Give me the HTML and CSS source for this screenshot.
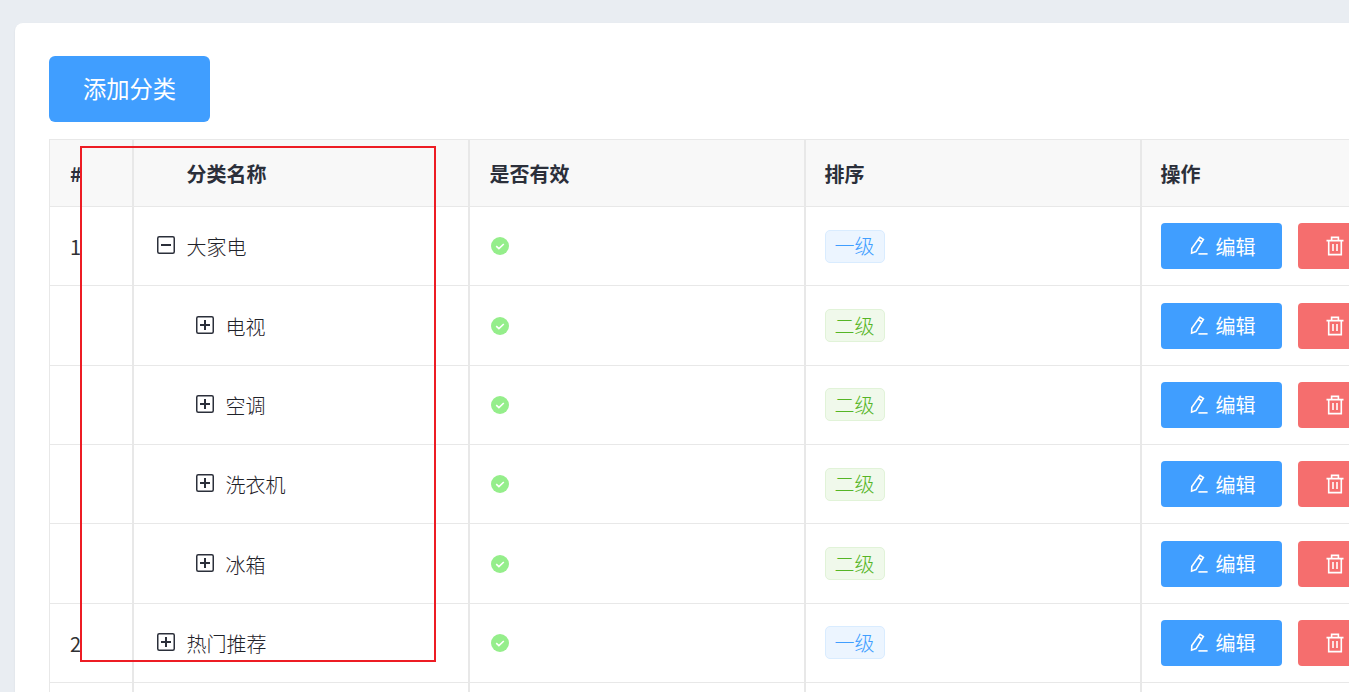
FILE: index.html
```html
<!DOCTYPE html>
<html lang="en">
<head>
    <meta charset="UTF-8">
    <title>商品分类</title>
    <link rel="stylesheet" href="styles.css">
</head>
<body>
    <svg class="sprites" xmlns="http://www.w3.org/2000/svg">
        <symbol id="i-minus" viewBox="0 0 18 18">
            <rect x="0.75" y="0.75" width="16.5" height="16.5" rx="1.5" fill="none" stroke="currentColor" stroke-width="1.5"/>
            <path d="M4 9h10" stroke="currentColor" stroke-width="2"/>
        </symbol>
        <symbol id="i-plus" viewBox="0 0 18 18">
            <rect x="0.75" y="0.75" width="16.5" height="16.5" rx="1.5" fill="none" stroke="currentColor" stroke-width="1.5"/>
            <path d="M4 9h10M9 4v10" stroke="currentColor" stroke-width="2"/>
        </symbol>
        <symbol id="i-check" viewBox="0 0 18 18">
            <circle cx="9" cy="9" r="9" fill="#95ee8b"/>
            <path d="M5.2 9.2l2.7 2.4 4.9-4.6" fill="none" stroke="#fff" stroke-width="1.6"/>
        </symbol>
        <symbol id="i-edit" viewBox="0 0 18 20">
            <path d="M9.8 1.2l3.6 2.2-7.4 12.2-4.4 1.6 0.2-4.6zM8.2 3.8l3.6 2.2" fill="none" stroke="currentColor" stroke-width="1.6"/>
            <path d="M8.4 17.9h9.2" stroke="currentColor" stroke-width="1.6"/>
        </symbol>
        <symbol id="i-delete" viewBox="0 0 18 20">
            <path d="M0.5 4.6h17M5.6 4.6V1.4h6.8v3.2M2.7 4.6v14h12.6v-14M7 8v7M11 8v7" fill="none" stroke="currentColor" stroke-width="1.6"/>
        </symbol>
    </svg>

    <div class="card">
        <button class="btn btn-add">添加分类</button>

        <table class="cat-table">
            <colgroup>
                <col class="col-index">
                <col class="col-wide">
                <col class="col-wide">
                <col class="col-wide">
                <col class="col-wide">
            </colgroup>
            <thead>
                <tr>
                    <th>#</th>
                    <th><span class="name-head">分类名称</span></th>
                    <th>是否有效</th>
                    <th>排序</th>
                    <th>操作</th>
                </tr>
            </thead>
            <tbody>
                <tr>
                    <td class="index-cell">1</td>
                    <td><div class="tree-cell"><svg class="tree-icon"><use href="#i-minus"/></svg>大家电</div></td>
                    <td><svg class="ok-icon"><use href="#i-check"/></svg></td>
                    <td><span class="tag tag-blue">一级</span></td>
                    <td><div class="ops"><button class="btn btn-edit"><svg class="btn-icon"><use href="#i-edit"/></svg>编辑</button><button class="btn btn-del" aria-label="删除"><svg class="btn-icon"><use href="#i-delete"/></svg></button></div></td>
                </tr>
                <tr>
                    <td class="index-cell"></td>
                    <td><div class="tree-cell child"><svg class="tree-icon"><use href="#i-plus"/></svg>电视</div></td>
                    <td><svg class="ok-icon"><use href="#i-check"/></svg></td>
                    <td><span class="tag tag-green">二级</span></td>
                    <td><div class="ops"><button class="btn btn-edit"><svg class="btn-icon"><use href="#i-edit"/></svg>编辑</button><button class="btn btn-del" aria-label="删除"><svg class="btn-icon"><use href="#i-delete"/></svg></button></div></td>
                </tr>
                <tr>
                    <td class="index-cell"></td>
                    <td><div class="tree-cell child"><svg class="tree-icon"><use href="#i-plus"/></svg>空调</div></td>
                    <td><svg class="ok-icon"><use href="#i-check"/></svg></td>
                    <td><span class="tag tag-green">二级</span></td>
                    <td><div class="ops"><button class="btn btn-edit"><svg class="btn-icon"><use href="#i-edit"/></svg>编辑</button><button class="btn btn-del" aria-label="删除"><svg class="btn-icon"><use href="#i-delete"/></svg></button></div></td>
                </tr>
                <tr>
                    <td class="index-cell"></td>
                    <td><div class="tree-cell child"><svg class="tree-icon"><use href="#i-plus"/></svg>洗衣机</div></td>
                    <td><svg class="ok-icon"><use href="#i-check"/></svg></td>
                    <td><span class="tag tag-green">二级</span></td>
                    <td><div class="ops"><button class="btn btn-edit"><svg class="btn-icon"><use href="#i-edit"/></svg>编辑</button><button class="btn btn-del" aria-label="删除"><svg class="btn-icon"><use href="#i-delete"/></svg></button></div></td>
                </tr>
                <tr>
                    <td class="index-cell"></td>
                    <td><div class="tree-cell child"><svg class="tree-icon"><use href="#i-plus"/></svg>冰箱</div></td>
                    <td><svg class="ok-icon"><use href="#i-check"/></svg></td>
                    <td><span class="tag tag-green">二级</span></td>
                    <td><div class="ops"><button class="btn btn-edit"><svg class="btn-icon"><use href="#i-edit"/></svg>编辑</button><button class="btn btn-del" aria-label="删除"><svg class="btn-icon"><use href="#i-delete"/></svg></button></div></td>
                </tr>
                <tr>
                    <td class="index-cell">2</td>
                    <td><div class="tree-cell"><svg class="tree-icon"><use href="#i-plus"/></svg>热门推荐</div></td>
                    <td><svg class="ok-icon"><use href="#i-check"/></svg></td>
                    <td><span class="tag tag-blue">一级</span></td>
                    <td><div class="ops"><button class="btn btn-edit"><svg class="btn-icon"><use href="#i-edit"/></svg>编辑</button><button class="btn btn-del" aria-label="删除"><svg class="btn-icon"><use href="#i-delete"/></svg></button></div></td>
                </tr>
                <tr>
                    <td></td>
                    <td></td>
                    <td></td>
                    <td></td>
                    <td></td>
                </tr>
            </tbody>
        </table>
    </div>

    <div class="highlight"></div>
</body>
</html>
```

FILE: styles.css
```css
html, body {
    height: 692px;
    overflow: hidden;
}
body {
    margin: 0;
    padding: 23px 0 0 15px;
    background-color: #e9edf2;
    font-family: "Noto Sans CJK SC", "Noto Sans", sans-serif;
    font-size: 20px;
    color: #303133;
}
.sprites {
    display: none;
}
.card {
    width: 1500px;
    box-sizing: border-box;
    padding: 33px 34px;
    background-color: #fff;
    border-radius: 8px;
    box-shadow: 0 1px 2px rgba(0, 0, 0, 0.08);
}
.btn {
    border: none;
    color: #fff;
    font-family: inherit;
    cursor: pointer;
    padding: 0;
}
.btn-add {
    display: block;
    width: 161px;
    height: 66px;
    padding-bottom: 2px;
    margin-bottom: 17px;
    background-color: #409eff;
    border-radius: 6px;
    font-size: 23.3px;
}
.cat-table {
    width: 1427px;
    table-layout: fixed;
    border-collapse: collapse;
    border: 1px solid #e8e8e8;
}
.col-index {
    width: 83px;
}
.col-wide {
    width: 336px;
}
.cat-table th,
.cat-table td {
    padding: 0 0 0 20px;
    border-bottom: 1px solid #e8e8e8;
    border-right: 2px solid #e8e8e8;
    text-align: left;
    line-height: 1;
}
.cat-table th:nth-child(n+4),
.cat-table td:nth-child(n+4) {
    padding-left: 19px;
}
.cat-table th {
    height: 64px;
    padding-top: 2px;
    background-color: #f8f8f8;
    font-weight: 700;
    color: #2b2f3a;
}
.cat-table td {
    height: 78.35px;
}
.cat-table .index-cell {
    height: 76.35px;
    padding-top: 2px;
}
.name-head {
    padding-left: 33px;
}
.tree-cell {
    display: flex;
    align-items: center;
    padding: 2px 0 0 3px;
    font-weight: 300;
    color: #1f2229;
}
.tree-cell.child {
    padding-left: 42px;
}
.tree-icon {
    width: 18px;
    height: 18px;
    margin-right: 12px;
    color: #2b2f3a;
    flex: none;
    position: relative;
    top: -2px;
}
.ok-icon {
    display: block;
    width: 18px;
    height: 18px;
    margin-left: 1px;
}
.tag {
    display: inline-flex;
    align-items: center;
    justify-content: center;
    box-sizing: border-box;
    width: 60px;
    height: 33px;
    border-radius: 5px;
    border: 1px solid;
    font-weight: 300;
    vertical-align: middle;
}
.tag-blue {
    background-color: #ecf5ff;
    border-color: #d9ecff;
    color: #409eff;
}
.tag-green {
    background-color: #f0f9eb;
    border-color: #e1f3d8;
    color: #55b526;
}
.ops {
    display: flex;
    gap: 16px;
}
.btn-edit,
.btn-del {
    display: flex;
    align-items: center;
    width: 121px;
    height: 46px;
    border-radius: 4px;
    font-size: 20px;
    flex: none;
}
.btn-edit {
    justify-content: center;
    padding-left: 3px;
    background-color: #409eff;
}
.btn-del {
    padding-left: 28px;
    background-color: #f56c6c;
    opacity: 0.98;
}
.btn-icon {
    width: 18px;
    height: 20px;
    margin-right: 8px;
}
.highlight {
    position: absolute;
    left: 80px;
    top: 146px;
    width: 352px;
    height: 512px;
    border: 2px solid #ed1c24;
}
```
